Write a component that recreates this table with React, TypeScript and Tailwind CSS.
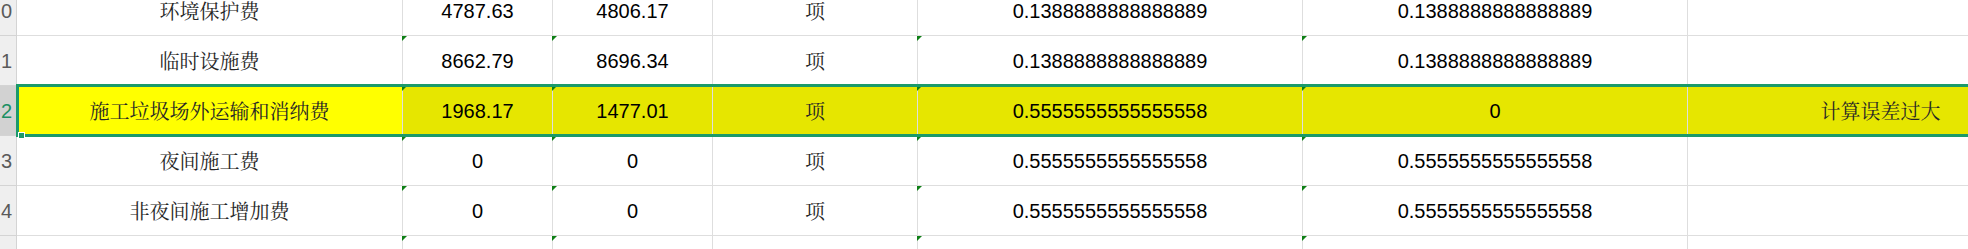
const cjk = "font-['Noto_Serif_CJK_SC','Noto_Sans_CJK_SC',serif]"
const num = "font-['Liberation_Sans',Arial,sans-serif]"

type Row = {
  n: string
  cells: string[]
  selected?: boolean
}

const cols = [
  { w: 'w-[386px]', kind: 'cjk', tri: false },
  { w: 'w-[150px]', kind: 'num', tri: true },
  { w: 'w-[160px]', kind: 'num', tri: true },
  { w: 'w-[205px]', kind: 'cjk', tri: false },
  { w: 'w-[385px]', kind: 'num', tri: true },
  { w: 'w-[385px]', kind: 'num', tri: true },
  { w: 'w-[386px]', kind: 'cjk', tri: false },
]

const rows: Row[] = [
  {
    n: '0',
    cells: ['环境保护费', '4787.63', '4806.17', '项', '0.1388888888888889', '0.1388888888888889', ''],
  },
  {
    n: '1',
    cells: ['临时设施费', '8662.79', '8696.34', '项', '0.1388888888888889', '0.1388888888888889', ''],
  },
  {
    n: '2',
    cells: ['施工垃圾场外运输和消纳费', '1968.17', '1477.01', '项', '0.5555555555555558', '0', '计算误差过大'],
    selected: true,
  },
  {
    n: '3',
    cells: ['夜间施工费', '0', '0', '项', '0.5555555555555558', '0.5555555555555558', ''],
  },
  {
    n: '4',
    cells: ['非夜间施工增加费', '0', '0', '项', '0.5555555555555558', '0.5555555555555558', ''],
  },
  // next row, only its top edge shows
  { n: '', cells: ['', '', '', '', '', '', ''] },
]

function Triangle() {
  return (
    <svg className="absolute -left-px top-0 z-[5]" width="5" height="5" viewBox="0 0 5 5">
      <polygon points="0,0 5,0 0,5" fill="#0f7f16" />
    </svg>
  )
}

function SheetRow({ row }: { row: Row }) {
  const sel = row.selected
  return (
    <div className="relative flex h-[50px] shrink-0">
      <div
        className={`flex w-[17px] shrink-0 items-center overflow-hidden border-r border-b border-[#d4d4d4] pl-px text-[20px] leading-none ${num} ${
          sel ? 'bg-[#d2d2d2] text-[#1b8f63]' : 'bg-[#efefef] text-[#5a5a5a]'
        }`}
      >
        {row.n}
      </div>
      {cols.map((c, i) => {
        const bg = sel ? (i === 0 ? 'bg-[#ffff00]' : 'bg-[#e6e600]') : 'bg-white'
        const font = c.kind === 'cjk' ? `${cjk} text-[#262626]` : `${num} text-black`
        return (
          <div
            key={i}
            className={`relative flex shrink-0 items-center justify-center border-r border-b border-[#dedede] text-[20px] leading-none whitespace-nowrap ${c.w} ${bg} ${font}`}
          >
            {c.tri && <Triangle />}
            {row.cells[i]}
          </div>
        )
      })}
      {sel && (
        <>
          <div className="pointer-events-none absolute -top-[2px] -bottom-px left-[16px] -right-[40px] z-10 border-[3px] border-[#1b9a6a]" />
          <div className="absolute left-[18px] top-[46px] z-20 h-[7px] w-[7px] border border-white bg-[#1b9a6a]" />
        </>
      )}
    </div>
  )
}

export default function App() {
  return (
    <div className="h-[249px] w-[1968px] overflow-hidden bg-white">
      <div className="-mt-[14px] flex flex-col">
        {rows.map((r, i) => (
          <SheetRow key={i} row={r} />
        ))}
      </div>
    </div>
  )
}
